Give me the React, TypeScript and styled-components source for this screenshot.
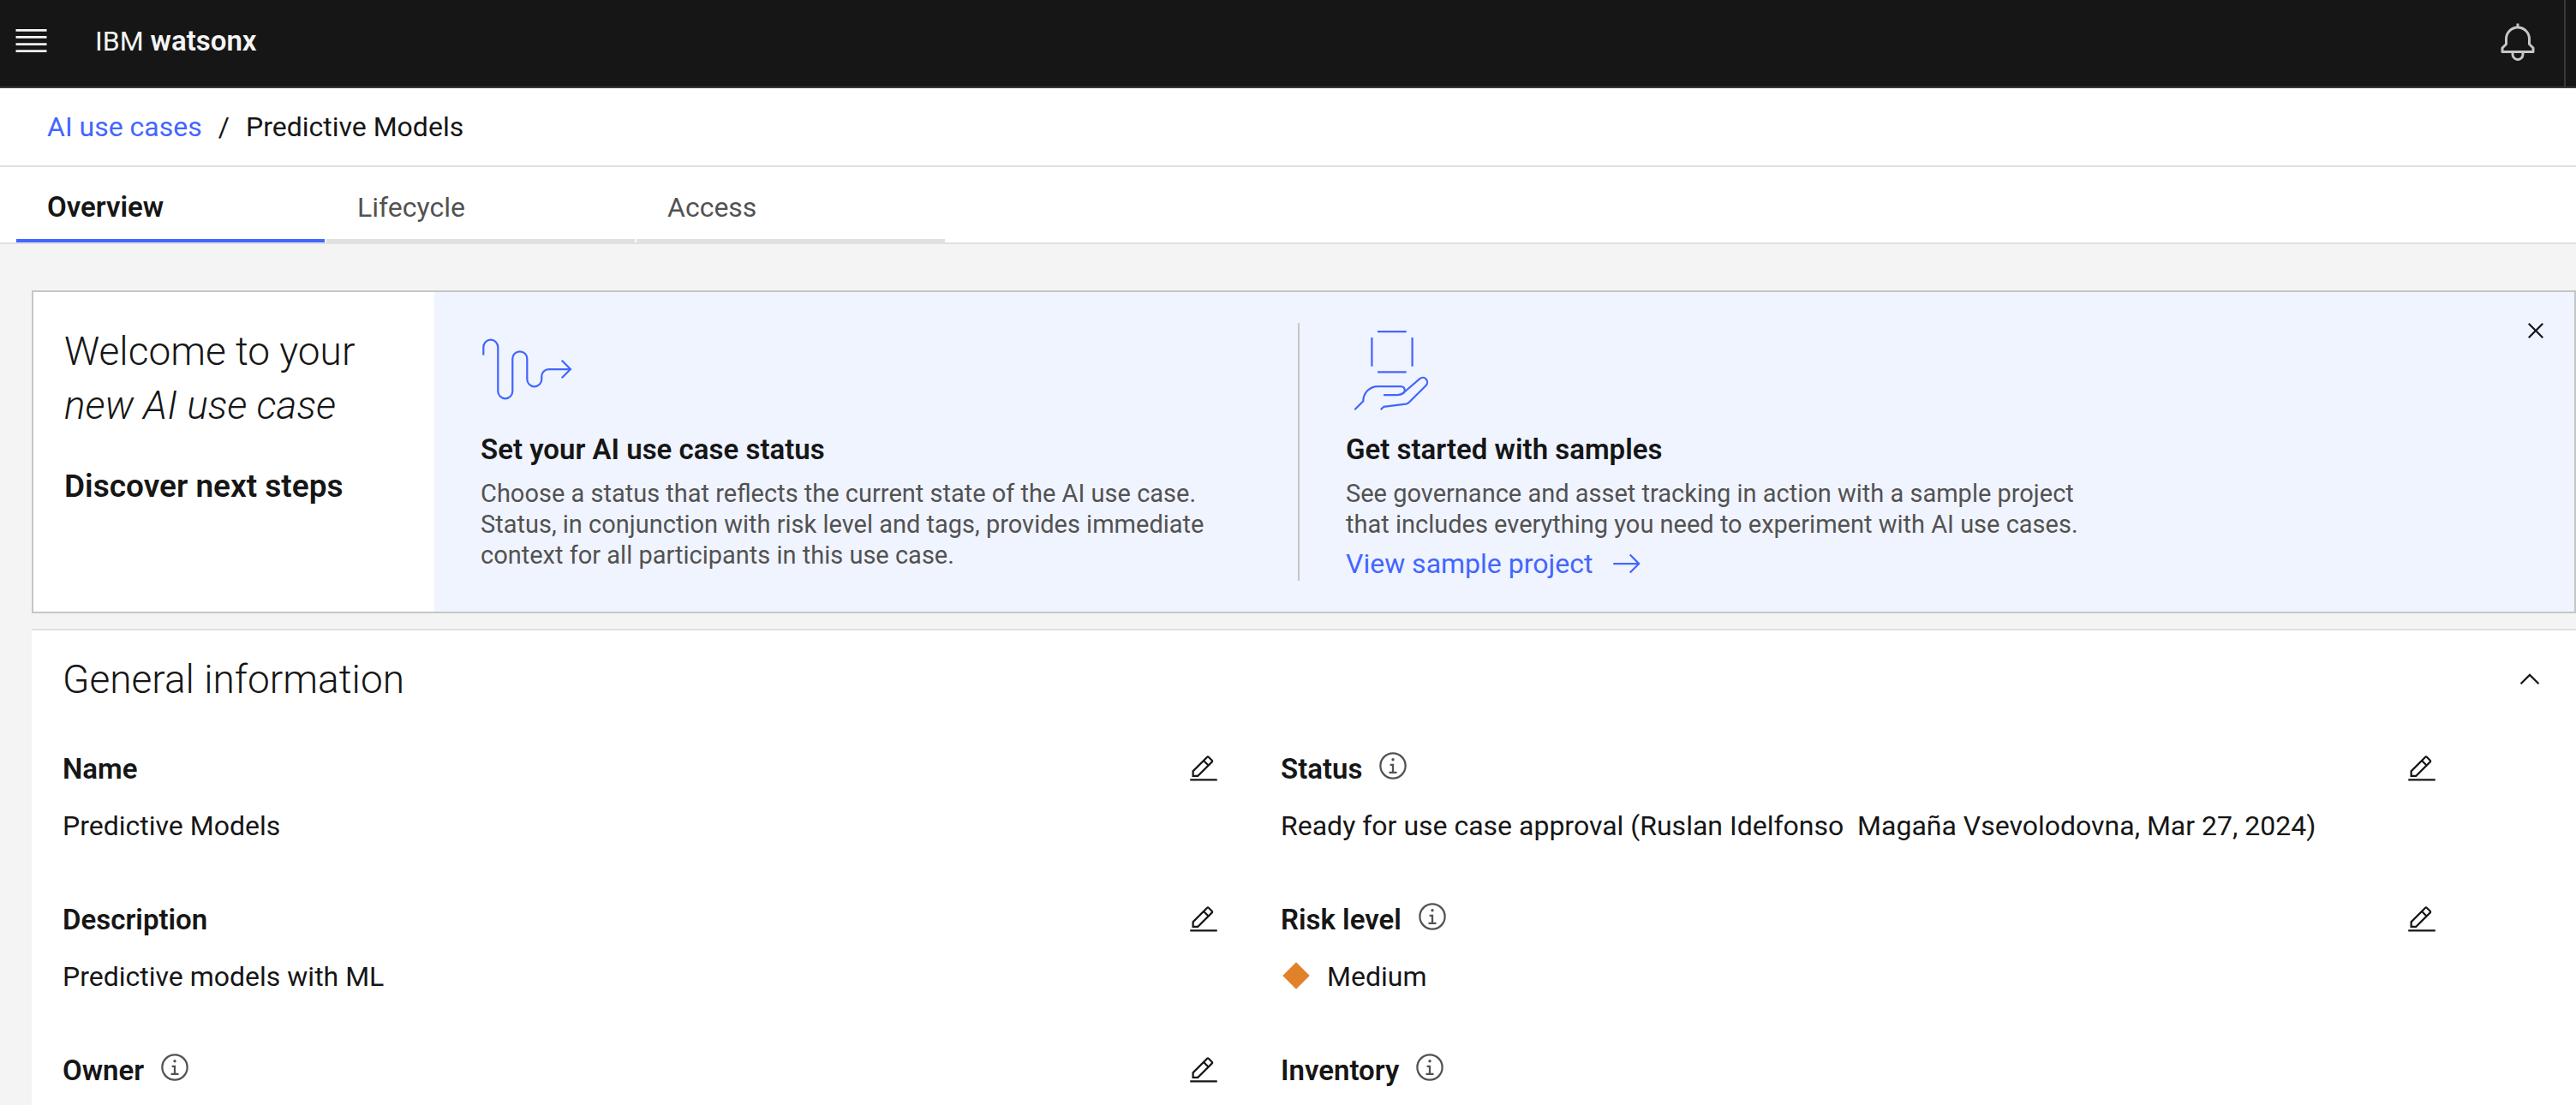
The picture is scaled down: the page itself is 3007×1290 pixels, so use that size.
import React from "react";
import styled, { createGlobalStyle, css } from "styled-components";

const color = {
  ink: "#161616",
  secondary: "#525252",
  link: "#4366ff",
  line: "#e0e0e0",
  border: "#c6c6c6",
  canvas: "#f4f4f4",
  shell: "#161616",
  shellLine: "#393939",
  tint: "#f0f4ff",
  risk: "#e0822a",
};

const GlobalStyle = createGlobalStyle`
  *, *::before, *::after { box-sizing: border-box; }
  html, body { margin: 0; background: ${color.canvas}; }
  body {
    font-family: Roboto, "Noto Sans", sans-serif;
    font-size: 32px;
    line-height: 40px;
    color: ${color.ink};
  }
  h1, h2, h3, p, dl, dt, dd, ol { margin: 0; padding: 0; font: inherit; }
  button { font: inherit; color: inherit; background: none; border: 0; padding: 0; margin: 0; cursor: pointer; }
  a { color: ${color.link}; text-decoration: none; }
  svg { display: block; flex: none; }
`;

const strongText = css`
  font-size: 33px;
  font-weight: 600;
`;

const Page = styled.div`
  display: flex;
  flex-direction: column;
  height: 100vh;
  overflow: hidden;
`;

const Shell = styled.header`
  display: flex;
  flex: none;
  align-items: stretch;
  height: 103px;
  padding-left: 14px;
  background: ${color.shell};
  color: ${color.canvas};
  border-bottom: 2px solid ${color.shellLine};
`;

const MenuButton = styled.button`
  display: flex;
  align-items: center;
  padding-bottom: 6px;
`;

const BellButton = styled.button`
  display: flex;
  align-items: center;
  padding-bottom: 2px;
`;

const Brand = styled.a`
  display: flex;
  align-items: center;
  gap: 8px;
  margin: 0 auto 0 52px;
  padding-bottom: 6px;
  color: ${color.canvas};
  strong { ${strongText} }
`;

const ShellEdge = styled.div`
  width: 14px;
  margin-left: 30px;
  border-left: 2px solid ${color.shellLine};
`;

const Crumbs = styled.nav`
  flex: none;
  padding: 25px 55px;
  background: #fff;
  border-bottom: 2px solid ${color.line};
  ol { display: flex; gap: 19px; list-style: none; }
`;

const TabBar = styled.div`
  display: flex;
  flex: none;
  gap: 2px;
  height: 90px;
  padding-left: 19px;
  background: #fff;
  border-bottom: 2px solid ${color.line};
`;

const Tab = styled.button<{ $active?: boolean }>`
  width: 360px;
  padding: 10px 36px 0;
  text-align: left;
  color: ${color.secondary};
  border-bottom: 4px solid ${color.line};
  ${(p) =>
    p.$active &&
    css`
      ${strongText}
      color: ${color.ink};
      border-bottom-color: ${color.link};
    `}
`;

const Main = styled.main`
  display: flex;
  flex: 1;
  flex-direction: column;
  gap: 18px;
  padding: 54px 0 0 37px;
  min-height: 0;
`;

const Banner = styled.section`
  display: flex;
  flex: none;
  border: 2px solid ${color.border};
`;

const Welcome = styled.div`
  flex: none;
  width: 468px;
  padding: 38px 36px 36px;
  background: #fff;
`;

const Display = styled.h1`
  font-size: 46px;
  font-weight: 300;
  line-height: 63px;
`;

const NextSteps = styled.h2`
  margin-top: 36px;
  font-size: 37px;
  font-weight: 600;
  line-height: 54px;
`;

const Steps = styled.div`
  display: flex;
  flex: 1;
  min-width: 0;
  padding: 36px 27px 36px 0;
  background: ${color.tint};
`;

const Step = styled.article<{ $divided?: boolean }>`
  flex: 0 1 1008px;
  padding-left: 54px;
  border-left: ${(p) => (p.$divided ? `2px solid ${color.border}` : "0")};
`;

const StepTitle = styled.h3`
  margin-top: 20px;
  ${strongText}
`;

const StepText = styled.p`
  max-width: 872px;
  margin-top: 13px;
  font-size: 29px;
  line-height: 36px;
  color: ${color.secondary};
`;

const StepLink = styled.a`
  display: inline-flex;
  align-items: center;
  gap: 22px;
  margin-top: 8px;
`;

const CloseButton = styled.button`
  align-self: flex-start;
  margin: -9px 0 0 auto;
`;

const Panel = styled.section`
  flex: 1;
  padding: 30px 36px 0;
  background: #fff;
  border-top: 2px solid ${color.line};
`;

const PanelHead = styled.div`
  display: flex;
  align-items: center;
  justify-content: space-between;
  h2 { font-size: 46px; font-weight: 300; line-height: 54px; }
`;

const Fields = styled.dl`
  display: grid;
  grid-template-columns: 1fr 1fr;
  grid-auto-rows: 116px;
  gap: 60px 72px;
  margin: 60px 126px 0 0;
`;

const FieldHead = styled.dt`
  display: flex;
  align-items: center;
  gap: 18px;
  height: 36px;
  ${strongText}
`;

const FieldValue = styled.dd`
  display: flex;
  align-items: center;
  gap: 18px;
  margin-top: 28px;
  white-space: pre-wrap;
`;

const EditButton = styled.button`
  margin-left: auto;
`;

const InfoButton = styled.button`
  padding-bottom: 8px;
  color: ${color.secondary};
`;

const Icon = ({ size = 36, children }: { size?: number; children: React.ReactNode }) => (
  <svg width={size} height={size} viewBox="0 0 32 32" fill="currentColor" aria-hidden="true">
    {children}
  </svg>
);

const MenuIcon = () => (
  <svg width="45" height="45" viewBox="0 0 20 20" fill="currentColor" aria-hidden="true">
    <path d="M2 14.8h16V16H2zM2 11.2h16v1.2H2zM2 7.6h16v1.2H2zM2 4h16v1.2H2z" />
  </svg>
);

const BellIcon = () => (
  <Icon size={48}>
    <path
      fill={color.border}
      d="M28.7071,19.293,26,16.5859V13a10.0136,10.0136,0,0,0-9-9.9492V1H15V3.0508A10.0136,10.0136,0,0,0,6,13v3.5859L3.2929,19.293A1,1,0,0,0,3,20v3a1,1,0,0,0,1,1h7v.7768a5.152,5.152,0,0,0,4.5,5.1987A5.0057,5.0057,0,0,0,21,25V24h7a1,1,0,0,0,1-1V20A1,1,0,0,0,28.7071,19.293ZM19,25a3,3,0,0,1-6,0V24h6Zm8-3H5V20.4141L7.707,17.707A1,1,0,0,0,8,17V13a8,8,0,0,1,16,0v4a1,1,0,0,0,.293.707L27,20.4141Z"
    />
  </Icon>
);

const CloseIcon = () => (
  <Icon>
    <path d="M17.4141 16 24 9.4141 22.5859 8 16 14.5859 9.4143 8 8 9.4141 14.5859 16 8 22.5859 9.4143 24 16 17.4141 22.5859 24 24 22.5859z" />
  </Icon>
);

const ChevronUpIcon = () => (
  <Icon>
    <path d="M16 10 26 20 24.6 21.4 16 12.8 7.4 21.4 6 20z" />
  </Icon>
);

const EditIcon = () => (
  <Icon>
    <path d="M2 26h28v2H2zM25.4,9c0.8-0.8,0.8-2,0-2.8l-3.6-3.6c-0.8-0.8-2-0.8-2.8,0l-15,15V24h6.4L25.4,9z M20.4,4L24,7.6l-3,3L17.4,7L20.4,4z M6,22v-3.6l10-10l3.6,3.6l-10,10H6z" />
  </Icon>
);

const InfoIcon = () => (
  <Icon>
    <path d="M17 22 17 14 13 14 13 16 15 16 15 22 12 22 12 24 20 24 20 22 17 22zM16 8a1.5 1.5 0 1 0 1.5 1.5A1.5 1.5 0 0 0 16 8z" />
    <path d="M16,30A14,14,0,1,1,30,16,14,14,0,0,1,16,30ZM16,4A12,12,0,1,0,28,16,12,12,0,0,0,16,4Z" />
  </Icon>
);

const ArrowIcon = () => (
  <svg width="36" height="36" viewBox="0 0 16 16" fill="currentColor" aria-hidden="true">
    <path d="M9.3 3.7 13.1 7.5H1v1h12.1L9.3 12.3 10 13l5-5-5-5z" />
  </svg>
);

const DiamondIcon = () => (
  <Icon>
    <path fill={color.risk} d="M16 1 30 15 16 29 2 15z" />
  </Icon>
);

const Pictogram = ({ children }: { children: React.ReactNode }) => (
  <svg
    width="108"
    height="108"
    viewBox="0 0 108 108"
    fill="none"
    stroke={color.link}
    strokeWidth="2.25"
    aria-hidden="true"
  >
    {children}
  </svg>
);

const PathPictogram = () => (
  <Pictogram>
    <path d="M3.3 37.5V28.2a8.5 8.5 0 0 1 17 0V79.8a8.5 8.5 0 0 0 17 0V41.8a8.5 8.5 0 0 1 17 0V65.8a8.5 8.5 0 0 0 17 0V62.3a8.3 8.3 0 0 1 8.3-8.3H105" />
    <path d="M94.7 43.7 105 54 94.7 64.3" />
  </Pictogram>
);

const HandPictogram = () => (
  <Pictogram>
    <path d="M37 10.2H70.7M37 57.3H70.7M30.4 17V50.7M77.6 17V50.7" />
    <path d="M10.3 101.3 20.3 91.3C20.3 81.6 27.9 74 37.3 74H64C67.5 74 69 76.5 68.7 79C68.4 80.6 67.8 81.6 66.8 82.4" />
    <path d="M44 84H60.5C63 84 64.8 83.6 66.8 82L86.3 65.2C88.5 63.4 91.8 63.4 93.6 65.4C95.5 67.4 95.5 70.8 93.6 73L74 92.5C72.7 93.8 71.8 94.4 70 94.7L44.3 97.8 40.7 101.3" />
  </Pictogram>
);

type FieldProps = { label: string; info?: boolean; edit?: boolean; children?: React.ReactNode };

const Field = ({ label, info, edit, children }: FieldProps) => (
  <div>
    <FieldHead>
      {label}
      {info && (
        <InfoButton aria-label={`About ${label}`}>
          <InfoIcon />
        </InfoButton>
      )}
      {edit && (
        <EditButton aria-label={`Edit ${label}`}>
          <EditIcon />
        </EditButton>
      )}
    </FieldHead>
    {children && <FieldValue>{children}</FieldValue>}
  </div>
);

export default function App() {
  return (
    <Page>
      <GlobalStyle />
      <Shell>
        <MenuButton aria-label="Open menu">
          <MenuIcon />
        </MenuButton>
        <Brand href="#home">
          IBM <strong>watsonx</strong>
        </Brand>
        <BellButton aria-label="Notifications">
          <BellIcon />
        </BellButton>
        <ShellEdge />
      </Shell>

      <Crumbs aria-label="Breadcrumb">
        <ol>
          <li>
            <a href="#use-cases">AI use cases</a>
          </li>
          <li aria-hidden="true">/</li>
          <li aria-current="page">Predictive Models</li>
        </ol>
      </Crumbs>

      <TabBar role="tablist">
        <Tab role="tab" aria-selected="true" $active>
          Overview
        </Tab>
        <Tab role="tab" aria-selected="false">
          Lifecycle
        </Tab>
        <Tab role="tab" aria-selected="false">
          Access
        </Tab>
      </TabBar>

      <Main>
        <Banner>
          <Welcome>
            <Display>
              Welcome to your
              <br />
              <em>new AI use case</em>
            </Display>
            <NextSteps>Discover next steps</NextSteps>
          </Welcome>
          <Steps>
            <Step>
              <PathPictogram />
              <StepTitle>Set your AI use case status</StepTitle>
              <StepText>
                Choose a status that reflects the current state of the AI use case. Status, in conjunction with risk
                level and tags, provides immediate context for all participants in this use case.
              </StepText>
            </Step>
            <Step $divided>
              <HandPictogram />
              <StepTitle>Get started with samples</StepTitle>
              <StepText>
                See governance and asset tracking in action with a sample project that includes everything you need to
                experiment with AI use cases.
              </StepText>
              <StepLink href="#sample-project">
                View sample project
                <ArrowIcon />
              </StepLink>
            </Step>
            <CloseButton aria-label="Close">
              <CloseIcon />
            </CloseButton>
          </Steps>
        </Banner>

        <Panel>
          <PanelHead>
            <h2>General information</h2>
            <button aria-label="Collapse section">
              <ChevronUpIcon />
            </button>
          </PanelHead>
          <Fields>
            <Field label="Name" edit>
              Predictive Models
            </Field>
            <Field label="Status" info edit>
              {"Ready for use case approval (Ruslan Idelfonso  Magaña Vsevolodovna, Mar 27, 2024)"}
            </Field>
            <Field label="Description" edit>
              Predictive models with ML
            </Field>
            <Field label="Risk level" info edit>
              <DiamondIcon />
              Medium
            </Field>
            <Field label="Owner" info edit />
            <Field label="Inventory" info />
          </Fields>
        </Panel>
      </Main>
    </Page>
  );
}
